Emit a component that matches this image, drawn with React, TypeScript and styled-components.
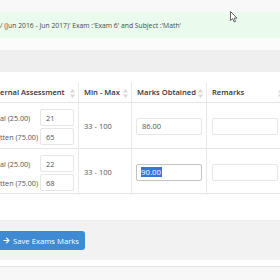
import React from 'react';
import styled, { createGlobalStyle } from 'styled-components';
import { FaArrowRight } from 'react-icons/fa';

const GlobalStyle = createGlobalStyle`
    body {
        margin: 0;
        background: #f7f7f7;
        font-family: "Open Sans", "Liberation Sans", sans-serif;
        color: #555;
    }
`;

const Page = styled.div`
    position: relative;
    width: 280px;
    height: 280px;
    overflow: hidden;
    display: flex;
    flex-direction: column;
    background: #f8f8f8;
`;

const Band = styled.div<{ $h: number; $bg: string }>`
    flex-shrink: 0;
    height: ${ p => p.$h }px;
    background: ${ p => p.$bg };
`;

const Alert = styled.div`
    flex-shrink: 0;
    height: 26px;
    display: flex;
    align-items: center;
    background: #eafaec;
    color: #4a4a4a;
    font-size: 6.8px;
    white-space: nowrap;
`;

const Panel = styled.div`
    flex-shrink: 0;
    background: #fff;
    padding-top: 10px;
    height: 138px;
`;

const Row = styled.div<{ $h: number }>`
    display: grid;
    grid-template-columns: 79px 53px 75px 80px;
    height: ${ p => p.$h }px;
    border-bottom: 1px solid #e4e4e4;
`;

const HeadCell = styled.div<{ $pl?: number }>`
    position: relative;
    display: flex;
    align-items: center;
    padding: 0 5px 0 ${ p => p.$pl ?? 5 }px;
    border-right: 1px solid #e8e8e8;
    color: #333;
    font-size: 7.6px;
    font-weight: 600;
    white-space: nowrap;
`;

const SortIcon = styled.svg`
    position: absolute;
    right: 3px;
    top: 7px;
`;

const Cell = styled.div<{ $pl?: number }>`
    display: flex;
    align-items: center;
    padding-left: ${ p => p.$pl ?? 5 }px;
    border-right: 1px solid #e8e8e8;
    font-size: 7.5px;
    white-space: nowrap;
`;

const PartsGrid = styled.div`
    display: grid;
    grid-template-columns: 40px 34px;
    row-gap: 2px;
    align-items: center;
    padding: 6px 0 4px;
    font-size: 7.2px;
    white-space: nowrap;
`;

const Box = styled.div<{ $w: number; $focus?: boolean }>`
    box-sizing: border-box;
    width: ${ p => p.$w }px;
    height: 17px;
    display: flex;
    align-items: center;
    padding-left: 5px;
    background: #fff;
    border: ${ p => (p.$focus ? '1.5px solid #c4c4c4' : '1px solid #e6e6e6') };
    border-radius: 2px;
    color: #555;
    font-size: 7.5px;
`;

const Selected = styled.span`
    display: inline-block;
    margin-left: -1px;
    padding: 1px 1px 1px 0;
    line-height: 8px;
    background: #3875d7;
    color: #fff;
    font-size: 7.8px;
`;

const Footer = styled.div`
    flex-shrink: 0;
    height: 40px;
    padding-top: 10px;
    box-sizing: border-box;
    background: #f2f2f2;
    border-top: 1px solid #ececec;
`;

const SaveButton = styled.button`
    display: flex;
    align-items: center;
    gap: 3px;
    height: 19px;
    width: 85px;
    padding: 0 0 0 3px;
    border: 0;
    border-radius: 0 3px 3px 0;
    background: #3f8ad3;
    color: #fff;
    font-family: "Open Sans", "Liberation Sans", sans-serif;
    font-size: 7.7px;
    white-space: nowrap;
`;

const Bottom = styled.div`
    flex: 1;
    border-top: 1px solid #e2e2e2;
    background: #f7f7f7;
`;

const Cursor = styled.svg`
    position: absolute;
    left: 230px;
    top: 11px;
`;

const Sort = () => (
    <SortIcon width='5' height='9' viewBox='0 0 5 9'>
        <path d='M2.5 0 L5 3.5 L0 3.5 Z M2.5 9 L5 5.5 L0 5.5 Z' fill='#d6d6d6' />
    </SortIcon>
);

const students = [
    { oral: '21', written: '65', marks: '86.00', selected: false, h: 45 },
    { oral: '22', written: '68', marks: '90.00', selected: true, h: 44 }
];

export default function App() {
    return (
        <Page>
            <GlobalStyle />
            <Band $h={ 12 } $bg='#f8f8f8' />
            <Alert>/ (Jun 2016 - Jun 2017)' Exam :'Exam 6' and Subject :'Math'</Alert>
            <Band $h={ 12 } $bg='#fbfbfb' />
            <Band $h={ 22 } $bg='#efefef' />
            <Panel>
                <Row $h={ 20 }>
                    <HeadCell $pl={ 0 }>ernal Assessment<Sort /></HeadCell>
                    <HeadCell>Min - Max<Sort /></HeadCell>
                    <HeadCell>Marks Obtained<Sort /></HeadCell>
                    <HeadCell>Remarks<Sort /></HeadCell>
                </Row>
                { students.map(s => (
                    <Row $h={ s.h } key={ s.oral }>
                        <Cell $pl={ 0 }>
                            <PartsGrid>
                                <span>al (25.00)</span>
                                <Box $w={ 34 }>{ s.oral }</Box>
                                <span>tten (75.00)</span>
                                <Box $w={ 34 }>{ s.written }</Box>
                            </PartsGrid>
                        </Cell>
                        <Cell>33 - 100</Cell>
                        <Cell $pl={ 4 }>
                            <Box $w={ 66 } $focus={ s.selected }>
                                { s.selected ? <Selected>{ s.marks }</Selected> : s.marks }
                            </Box>
                        </Cell>
                        <Cell>
                            <Box $w={ 66 } />
                        </Cell>
                    </Row>
                )) }
            </Panel>
            <Footer>
                <SaveButton>
                    <FaArrowRight size={ 7 } />
                    Save Exams Marks
                </SaveButton>
            </Footer>
            <Band $h={ 6 } $bg='#ffffff' />
            <Bottom />
            <Cursor width='8' height='12' viewBox='0 0 8 12'>
                <path d='M0.5 0.5 L0.5 9.5 L2.6 7.6 L4.2 11 L5.6 10.4 L4.1 7.1 L7 7.1 Z' fill='#fff' stroke='#666' strokeWidth='1' />
            </Cursor>
        </Page>
    );
}
